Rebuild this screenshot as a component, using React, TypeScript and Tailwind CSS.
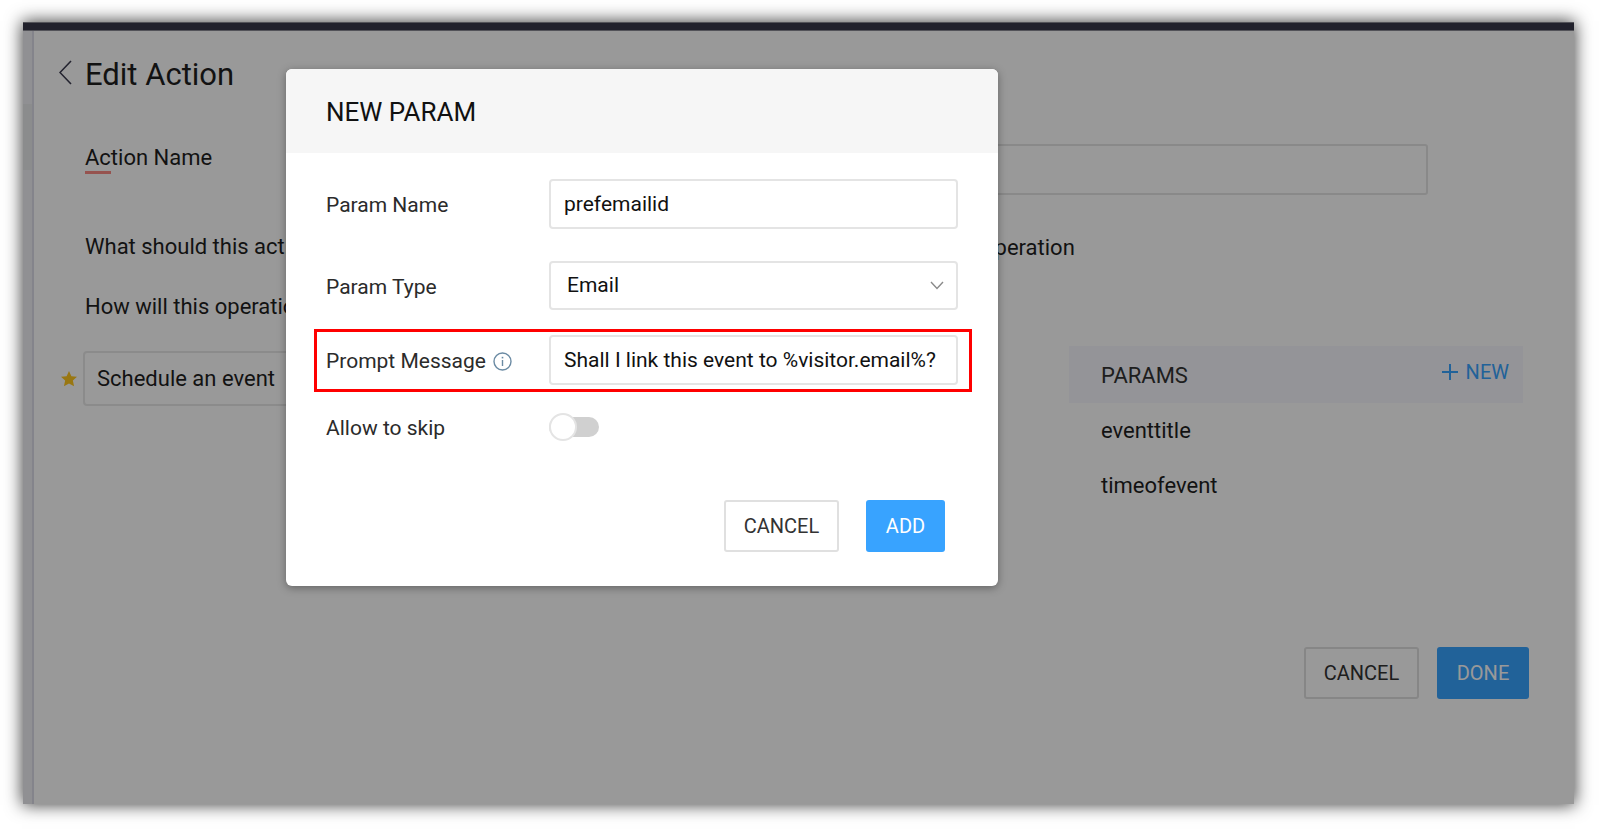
import { useState } from "react";
import type { ReactNode } from "react";

interface ParamRowProps {
  label: string;
  htmlFor: string;
  icon?: ReactNode;
  highlighted?: boolean;
  className?: string;
  children: ReactNode;
}

const fieldClass =
  "w-full min-w-0 rounded-[4px] border-2 border-[#e4e4e4] bg-white text-[21px] text-[#111111] outline-none";

function InfoIcon() {
  return (
    <svg width="19" height="19" viewBox="0 0 19 19" fill="none" stroke="#6a8aa3">
      <circle cx="9.5" cy="9.5" r="8.5" strokeWidth="1.4" />
      <path d="M9.5 8v6" strokeWidth="1.4" />
      <path d="M9.5 4.8v1.6" strokeWidth="1.6" />
    </svg>
  );
}

function ParamRow({ label, htmlFor, icon, highlighted, className, children }: ParamRowProps) {
  return (
    <div
      className={`flex items-center ${
        highlighted
          ? "border-[3px] border-[#ff0000] pt-[3px] pr-[11px] pb-1 pl-[9px]"
          : "pr-[14px] pl-3"
      } ${className ?? ""}`}
    >
      <div className="flex w-[223px] shrink-0 items-center gap-[7px] pt-[2px]">
        <label htmlFor={htmlFor} className="text-[21px] leading-7 text-[#2b2b2b]">
          {label}
        </label>
        {icon}
      </div>
      <div className="min-w-0 flex-1">{children}</div>
    </div>
  );
}

function NewParamDialog() {
  const [name, setName] = useState("prefemailid");
  const [type, setType] = useState("Email");
  const [prompt, setPrompt] = useState("Shall I link this event to %visitor.email%?");
  const [skip, setSkip] = useState(false);

  return (
    <div
      role="dialog"
      aria-labelledby="dialog-title"
      className="w-[712px] max-w-full overflow-hidden rounded-[6px] bg-white shadow-[0_2px_8px_rgba(0,0,0,0.35)]"
    >
      <div className="flex h-[84px] items-center bg-[#f6f6f6] px-10 pt-[2px]">
        <h2 id="dialog-title" className="text-[26px] leading-8 text-[#111111]">
          NEW PARAM
        </h2>
      </div>

      <form className="pt-[26px] pr-[26px] pb-[34px] pl-7" onSubmit={(e) => e.preventDefault()}>
        <ParamRow label="Param Name" htmlFor="param-name">
          <input
            id="param-name"
            type="text"
            value={name}
            onChange={(e) => setName(e.target.value)}
            className={`${fieldClass} block h-[50px] px-[13px]`}
          />
        </ParamRow>

        <ParamRow label="Param Type" htmlFor="param-type" className="mt-8">
          <div className="relative">
            <select
              id="param-type"
              value={type}
              onChange={(e) => setType(e.target.value)}
              className={`${fieldClass} block h-[49px] appearance-none px-4`}
            >
              <option>Email</option>
              <option>Text</option>
              <option>Number</option>
            </select>
            <svg
              className="pointer-events-none absolute top-5 right-[14px]"
              width="14"
              height="9"
              viewBox="0 0 14 9"
              fill="none"
              stroke="#8a8a8a"
              strokeWidth="1.4"
            >
              <path d="M1 1l6 6.5L13 1" />
            </svg>
          </div>
        </ParamRow>

        <ParamRow
          label="Prompt Message"
          htmlFor="prompt-message"
          icon={<InfoIcon />}
          highlighted
          className="mt-[19px]"
        >
          <input
            id="prompt-message"
            type="text"
            value={prompt}
            onChange={(e) => setPrompt(e.target.value)}
            className={`${fieldClass} block h-[50px] px-[13px]`}
          />
        </ParamRow>

        <ParamRow label="Allow to skip" htmlFor="allow-skip" className="mt-5">
          <div className="relative flex h-7 w-[50px] items-center">
            <input
              id="allow-skip"
              type="checkbox"
              role="switch"
              checked={skip}
              onChange={(e) => setSkip(e.target.checked)}
              className="peer absolute inset-0 z-10 cursor-pointer opacity-0"
            />
            <span className="h-5 w-full rounded-full bg-[#d0d0d0] peer-checked:bg-[#38a3ff]" />
            <span className="absolute left-0 size-7 rounded-full border-2 border-[#e4e4e4] bg-white peer-checked:left-[22px]" />
          </div>
        </ParamRow>

        <div className="mt-[58px] flex justify-end gap-[27px] pr-[27px]">
          <button
            type="button"
            className="h-[52px] w-[115px] rounded-[3px] border-2 border-[#e0e0e0] bg-white text-[20px] text-[#333333]"
          >
            CANCEL
          </button>
          <button
            type="submit"
            className="h-[52px] w-[79px] rounded-[3px] bg-[#38a3ff] text-[20px] text-white"
          >
            ADD
          </button>
        </div>
      </form>
    </div>
  );
}

function ParamsPanel() {
  const params = ["eventtitle", "timeofevent"];

  return (
    <section className="w-[454px] shrink-0">
      <div className="flex h-[57px] items-center justify-between bg-[#f7f7fe] pr-[14px] pl-8">
        <h3 className="pt-[2px] text-[22px] leading-7 text-[#333333]">PARAMS</h3>
        <button type="button" className="flex items-center gap-2 pb-[6px] text-[20px] leading-7 text-[#38a3ff]">
          <svg width="16" height="16" viewBox="0 0 16 16" stroke="currentColor" strokeWidth="2">
            <path d="M8 0v16M0 8h16" />
          </svg>
          NEW
        </button>
      </div>
      <ul>
        {params.map((param) => (
          <li key={param} className="flex h-[55px] items-center pl-8 text-[22px] text-[#1f1f1f]">
            {param}
          </li>
        ))}
      </ul>
    </section>
  );
}

function EditAction() {
  return (
    <main className="min-w-0 flex-1 pt-6 pb-[100px] pl-[25px] text-[22px] text-[#1f1f1f]">
      <div className="flex h-10 items-center gap-[13px]">
        <button type="button" aria-label="Back" className="pb-[6px]">
          <svg width="13" height="25" viewBox="0 0 13 25" fill="none" stroke="#3c3c50" strokeWidth="1.6">
            <path d="M12 1L1 12.5L12 24" />
          </svg>
        </button>
        <h1 className="text-[31px] leading-10">Edit Action</h1>
      </div>

      <div className="mt-[49px] flex items-start pr-[146px] pl-[26px]">
        <div className="w-[463px] shrink-0">
          <label htmlFor="action-name" className="block leading-[27px]">
            Action Name
          </label>
          <div className="h-[3px] w-[26px] bg-[#fb8a84]" />
        </div>
        <input
          id="action-name"
          type="text"
          className="h-[51px] min-w-0 flex-1 rounded-[3px] border-2 border-[#e4e4e4] bg-white px-3 outline-none"
        />
      </div>

      <div className="mt-[38px] flex items-start pl-[26px] leading-7">
        <p className="w-[897px] shrink-0">What should this action</p>
        <p className="pt-px">operation</p>
      </div>

      <p className="mt-[31px] pl-[26px] leading-7">How will this operation</p>

      <div className="mt-[25px] flex items-start justify-between pr-[51px] pl-[2px]">
        <div className="flex items-center pt-[5px]">
          <svg width="16" height="16" viewBox="0 0 24 24" fill="#ffc61f" className="mr-[6px]">
            <path d="M12 0l3.600 7.700 8.400.9-6.200 5.700 1.800 8.500L12 18.600 4.400 22.800l1.800-8.500L0 8.600l8.400-.9z" />
          </svg>
          <div className="flex h-[55px] w-[420px] items-center rounded-[4px] border-2 border-[#e8e8e8] pl-3">
            Schedule an event
          </div>
        </div>
        <ParamsPanel />
      </div>

      <div className="mt-[134px] flex justify-end gap-[18px] pr-[45px]">
        <button
          type="button"
          className="h-[52px] w-[115px] rounded-[3px] border-2 border-[#e0e0e0] text-[20px] text-[#333333]"
        >
          CANCEL
        </button>
        <button
          type="button"
          className="h-[52px] w-[92px] rounded-[3px] bg-[#38a3ff] text-[20px] text-white"
        >
          DONE
        </button>
      </div>
    </main>
  );
}

export default function App() {
  return (
    <div className="flex min-h-screen bg-white pt-[22px] pr-[28px] pb-[26px] pl-[23px] font-[Roboto,sans-serif]">
      <div className="relative flex min-w-0 flex-1 flex-col bg-white shadow-[0_0_16px_1px_rgba(0,0,0,0.75)]">
        <div className="h-[9px] border-y border-[#8a8a94] bg-[#38384a]" />
        <div className="flex flex-1">
          <aside className="w-[11px] shrink-0 border-r-2 border-[#dcdce8] bg-[#f0f1f5] pt-[73px]">
            <div className="h-[66px] bg-[#e8e9ec]" />
          </aside>
          <EditAction />
        </div>

        <div className="absolute inset-0 bg-black/40 pt-[47px] pl-[263px]">
          <NewParamDialog />
        </div>
      </div>
    </div>
  );
}
